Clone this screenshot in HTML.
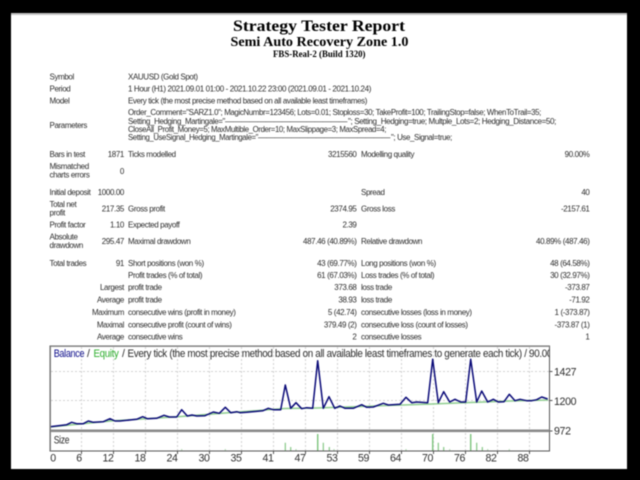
<!DOCTYPE html>
<html><head><meta charset="utf-8"><style>
html,body{margin:0;padding:0;width:640px;height:480px;background:#000;overflow:hidden}
svg{position:absolute;left:0;top:0;filter:blur(.4px)}
.t{font:8px "Liberation Sans",sans-serif;fill:#2c2c2c;letter-spacing:-.38px}
.r{text-anchor:end}
.a{font:10.6px "Liberation Sans",sans-serif;fill:#2c2c2c;letter-spacing:-.35px}
.h{font-family:"Liberation Serif",serif;font-weight:bold;fill:#000}
</style></head><body>
<svg width="640" height="480" viewBox="0 0 640 480" xmlns="http://www.w3.org/2000/svg">
<defs><clipPath id="c"><rect x="50" y="346" width="499.5" height="20"/></clipPath></defs>
<rect width="640" height="480" fill="#000"/>
<rect x="11" y="13" width="616" height="456" fill="#fff"/>
<rect x="11" y="13" width="616" height="2" fill="#c4c4c4"/>

<text class="h" x="233" y="31" font-size="16" textLength="172" lengthAdjust="spacingAndGlyphs">Strategy Tester Report</text>
<text class="h" x="230.5" y="46" font-size="13.5" textLength="178" lengthAdjust="spacingAndGlyphs">Semi Auto Recovery Zone 1.0</text>
<text class="h" x="273" y="57" font-size="9.5" textLength="92.5" lengthAdjust="spacingAndGlyphs">FBS-Real-2 (Build 1320)</text>

<text class="t" x="49.5" y="79.3">Symbol</text>
<text class="t" x="128" y="79.3">XAUUSD (Gold Spot)</text>
<text class="t" x="49.5" y="91.7">Period</text>
<text class="t" x="128" y="91.7" textLength="243" lengthAdjust="spacingAndGlyphs">1 Hour (H1) 2021.09.01 01:00 - 2021.10.22 23:00 (2021.09.01 - 2021.10.24)</text>
<text class="t" x="49.5" y="103.7">Model</text>
<text class="t" x="128" y="103.7" textLength="239" lengthAdjust="spacingAndGlyphs">Every tick (the most precise method based on all available least timeframes)</text>
<text class="t" x="49.5" y="128">Parameters</text>
<text class="t" x="128" y="115" textLength="413" lengthAdjust="spacingAndGlyphs">Order_Comment="SARZ1.0"; MagicNumbr=123456; Lots=0.01; Stoploss=30; TakeProfit=100; TrailingStop=false; WhenToTrail=35;</text>
<text class="t" x="128" y="124" textLength="97" lengthAdjust="spacingAndGlyphs">Setting_Hedging_Martingale="</text>
<text class="t" x="225" y="124" textLength="122" lengthAdjust="spacingAndGlyphs">———————————————</text>
<text class="t" x="348" y="124" textLength="208" lengthAdjust="spacingAndGlyphs">"; Setting_Hedging=true; Multple_Lots=2; Hedging_Distance=50;</text>
<text class="t" x="128" y="132" textLength="258" lengthAdjust="spacingAndGlyphs">CloseAll_Profit_Money=5; MaxMultible_Order=10; MaxSlippage=3; MaxSpread=4;</text>
<text class="t" x="128" y="140" textLength="130" lengthAdjust="spacingAndGlyphs">Setting_UseSignal_Hedging_Martingale="</text>
<text class="t" x="258" y="140" textLength="132" lengthAdjust="spacingAndGlyphs">————————————————</text>
<text class="t" x="391" y="140" textLength="61" lengthAdjust="spacingAndGlyphs">"; Use_Signal=true;</text>

<text class="t" x="49.5" y="157">Bars in test</text>
<text class="t r" x="124" y="157">1871</text>
<text class="t" x="128" y="157">Ticks modelled</text>
<text class="t r" x="356.5" y="157">3215560</text>
<text class="t" x="361" y="157">Modelling quality</text>
<text class="t r" x="589.5" y="157">90.00%</text>

<text class="t" x="49.5" y="169">Mismatched</text>
<text class="t" x="49.5" y="177.5">charts errors</text>
<text class="t r" x="124" y="174">0</text>

<text class="t" x="49.5" y="195">Initial deposit</text>
<text class="t r" x="124" y="195">1000.00</text>
<text class="t" x="361" y="195">Spread</text>
<text class="t r" x="589.5" y="195">40</text>

<text class="t" x="49.5" y="207">Total net</text>
<text class="t" x="49.5" y="215.7">profit</text>
<text class="t r" x="124" y="211.3">217.35</text>
<text class="t" x="128" y="211.3">Gross profit</text>
<text class="t r" x="356.5" y="211.3">2374.95</text>
<text class="t" x="361" y="211.3">Gross loss</text>
<text class="t r" x="589.5" y="211.3">-2157.61</text>

<text class="t" x="49.5" y="227.7">Profit factor</text>
<text class="t r" x="124" y="227.7">1.10</text>
<text class="t" x="128" y="227.7">Expected payoff</text>
<text class="t r" x="356.5" y="227.7">2.39</text>

<text class="t" x="49.5" y="239.7">Absolute</text>
<text class="t" x="49.5" y="248">drawdown</text>
<text class="t r" x="124" y="244">295.47</text>
<text class="t" x="128" y="244">Maximal drawdown</text>
<text class="t r" x="356.5" y="244">487.46 (40.89%)</text>
<text class="t" x="361" y="244">Relative drawdown</text>
<text class="t r" x="589.5" y="244">40.89% (487.46)</text>

<text class="t" x="49.5" y="266">Total trades</text>
<text class="t r" x="124" y="266">91</text>
<text class="t" x="128" y="266">Short positions (won %)</text>
<text class="t r" x="356.5" y="266">43 (69.77%)</text>
<text class="t" x="361" y="266">Long positions (won %)</text>
<text class="t r" x="589.5" y="266">48 (64.58%)</text>

<text class="t" x="128" y="278">Profit trades (% of total)</text>
<text class="t r" x="356.5" y="278">61 (67.03%)</text>
<text class="t" x="361" y="278">Loss trades (% of total)</text>
<text class="t r" x="589.5" y="278">30 (32.97%)</text>

<text class="t r" x="124" y="290">Largest</text>
<text class="t" x="128" y="290">profit trade</text>
<text class="t r" x="356.5" y="290">373.68</text>
<text class="t" x="361" y="290">loss trade</text>
<text class="t r" x="589.5" y="290">-373.87</text>

<text class="t r" x="124" y="302.7">Average</text>
<text class="t" x="128" y="302.7">profit trade</text>
<text class="t r" x="356.5" y="302.7">38.93</text>
<text class="t" x="361" y="302.7">loss trade</text>
<text class="t r" x="589.5" y="302.7">-71.92</text>

<text class="t r" x="124" y="315">Maximum</text>
<text class="t" x="128" y="315">consecutive wins (profit in money)</text>
<text class="t r" x="356.5" y="315">5 (42.74)</text>
<text class="t" x="361" y="315">consecutive losses (loss in money)</text>
<text class="t r" x="589.5" y="315">1 (-373.87)</text>

<text class="t r" x="124" y="327.3">Maximal</text>
<text class="t" x="128" y="327.3">consecutive profit (count of wins)</text>
<text class="t r" x="356.5" y="327.3">379.49 (2)</text>
<text class="t" x="361" y="327.3">consecutive loss (count of losses)</text>
<text class="t r" x="589.5" y="327.3">-373.87 (1)</text>

<text class="t r" x="124" y="339.3">Average</text>
<text class="t" x="128" y="339.3">consecutive wins</text>
<text class="t r" x="356.5" y="339.3">2</text>
<text class="t" x="361" y="339.3">consecutive losses</text>
<text class="t r" x="589.5" y="339.3">1</text>

<!-- chart grid -->
<g stroke="#d2d2d2" stroke-width="1" stroke-dasharray="2 2" fill="none">
<path d="M81.5 347V429M113.5 347V429M145.5 347V429M177.5 347V429M209.5 347V429M241.5 347V429M273.5 347V429M305.5 347V429M337.5 347V429M369.5 347V429M401.5 347V429M433.5 347V429M465.5 347V429M497.5 347V429M529.5 347V429"/>
<path d="M81.5 433V451M113.5 433V451M145.5 433V451M177.5 433V451M209.5 433V451M241.5 433V451M273.5 433V451M305.5 433V451M337.5 433V451M369.5 433V451M401.5 433V451M433.5 433V451M465.5 433V451M497.5 433V451M529.5 433V451"/>
<path d="M51 371.5H549M51 400.5H549"/>
</g>

<!-- equity -->
<polyline fill="none" stroke="#8fce8f" stroke-width="1.4" points="50,427 110,421 181,416.5 225,413 285,408.5 317,408 432,404 470,402.5 510,401 548,400"/>
<!-- balance -->
<polyline fill="none" stroke="#0a0a78" stroke-width="1.5" stroke-linejoin="round" points="50,426.7 66.7,424.7 71.7,422.3 76.7,423.7 83.3,423.7 88.3,421 93.3,422.3 103.3,421.7 110,418.7 115,421 120,421 136.7,419.3 142.7,416.7 147.3,418.7 156.7,418.3 164,415.3 169.3,417 176.7,417 181.7,409.7 187.3,416 192,415 196.7,416 205,415.7 213.3,412 219.3,413.3 225.3,407.3 230.7,412.7 236.7,411.7 240,412.7 246.7,412.3 263,410.7 268.3,408.3 273.3,409.7 280.7,409.7 285.3,385 290.7,408.3 296,402.7 301.7,408.7 306.7,407.7 312.7,408.3 317.7,360.7 323.3,408.3 329,396.7 334.7,408.3 340,406 345,408.3 353.3,408.3 361.7,404.7 366.7,407.3 373.3,407 383.3,403.3 388.3,405 400,404.3 406,397.3 411.7,402.7 416.7,402 427.7,402.7 432.7,359.3 438.3,402.7 443.7,391.7 449.7,402 455,399.3 460.7,402 465.7,402 470.7,359.3 476.7,402 481.7,391 487.7,402 493.3,399.3 498.3,402 504,401.7 509.3,394.3 515,400.7 520,399.3 526.7,400.7 531.7,400.7 536.7,399.7 541.7,397 547.7,399"/>

<!-- volume bars -->
<g stroke="#7cc47c" stroke-width="1.1" fill="none">
<path d="M317.7 434V451M432.7 434V451M470.7 434V451" stroke-width="1.4"/>
<path d="M285.3 442.7V451M323.3 442.7V451M438.3 442.7V451M476.7 442.7V451"/>
<path d="M290.7 447V451M329.3 447V451M443.7 447V451M482.3 447V451"/>
<path d="M296 449V451M334 449V451M449.7 449V451M487.7 449V451M181.7 449V451M225.3 449V451M406 449V451M509.3 449V451" stroke="#b5deb5"/>
</g>

<!-- frame -->
<rect x="50" y="346" width="499.5" height="105" fill="none" stroke="#555" stroke-width="1"/>
<rect x="50" y="346" width="499.5" height="1" fill="#999"/>
<rect x="50" y="346" width="1" height="105" fill="#888"/>
<rect x="50" y="429.5" width="499.5" height="2.6" fill="#8a8a8a"/>
<path d="M549.5 371.5h3M549.5 400.5h3M549.5 431h3M81.5 451v3M113.5 451v3M145.5 451v3M177.5 451v3M209.5 451v3M241.5 451v3M273.5 451v3M305.5 451v3M337.5 451v3M369.5 451v3M401.5 451v3M433.5 451v3M465.5 451v3M497.5 451v3M529.5 451v3" stroke="#555" fill="none"/>

<text class="a" x="53.7" y="357" textLength="30.5" lengthAdjust="spacingAndGlyphs" style="fill:#0c0c8a">Balance</text>
<text class="a" x="87" y="357">/</text>
<text class="a" x="93.5" y="357" textLength="25" lengthAdjust="spacingAndGlyphs" style="fill:#2faf2f">Equity</text>
<text class="a" x="122" y="357">/</text>
<g clip-path="url(#c)">
<text class="a" x="127.5" y="357" textLength="433" lengthAdjust="spacingAndGlyphs">Every tick (the most precise method based on all available least timeframes to generate each tick) / 90.00%</text>
</g>
<text class="a" x="53.7" y="443.5" textLength="15.5" lengthAdjust="spacingAndGlyphs">Size</text>

<g class="a" text-anchor="middle">
<text x="53" y="461.3">0</text><text x="79" y="461.3">6</text><text x="108" y="461.3">12</text><text x="140" y="461.3">18</text><text x="172" y="461.3">24</text><text x="204" y="461.3">30</text><text x="236" y="461.3">35</text><text x="268" y="461.3">41</text><text x="300" y="461.3">47</text><text x="332" y="461.3">53</text><text x="363.5" y="461.3">59</text><text x="395.5" y="461.3">64</text><text x="427.5" y="461.3">70</text><text x="459.5" y="461.3">76</text><text x="491" y="461.3">82</text><text x="523" y="461.3">88</text>
</g>
<text class="a" x="554" y="375.7">1427</text>
<text class="a" x="554" y="405">1200</text>
<text class="a" x="554" y="434.3">972</text>
</svg>
</body></html>
